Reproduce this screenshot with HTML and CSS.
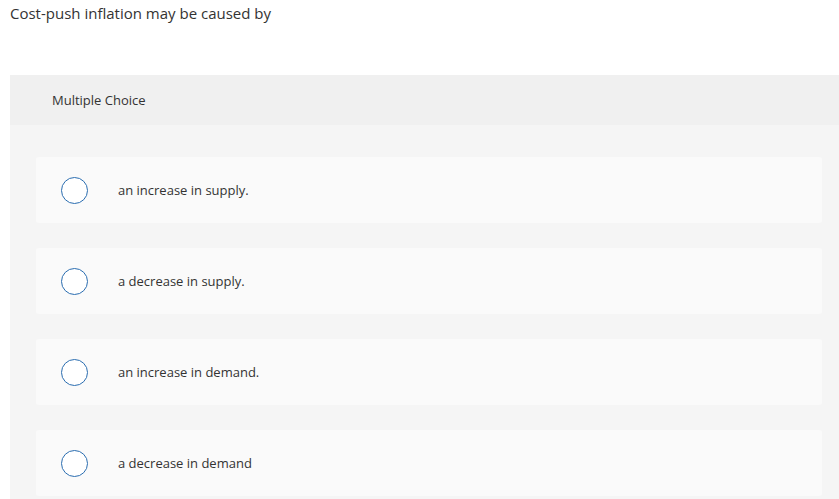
FILE: index.html
```html
<!DOCTYPE html>
<html>
<head>
<meta charset="utf-8">
<link rel="stylesheet" href="styles.css">
</head>
<body>
<p class="question">Cost-push inflation may be caused by</p>
<section class="panel">
  <div class="panel-head">Multiple Choice</div>
  <div class="panel-body">
    <div class="choice"><span class="radio"></span><span class="label">an increase in supply.</span></div>
    <div class="choice"><span class="radio"></span><span class="label">a decrease in supply.</span></div>
    <div class="choice"><span class="radio"></span><span class="label">an increase in demand.</span></div>
    <div class="choice"><span class="radio"></span><span class="label">a decrease in demand</span></div>
  </div>
</section>
</body>
</html>
```

FILE: styles.css
```css
html, body { margin: 0; padding: 0; background: #fff; }
body {
  font-family: "Open Sans", "Liberation Sans", sans-serif;
  color: #333;
  padding: 0 0 0 10px;
  overflow: hidden;
}
.question {
  margin: 0;
  padding-top: 4px;
  height: 71px;
  font-size: 15px;
  line-height: 18px;
  color: #333;
}
.panel { background: #f5f5f5; }
.panel-head {
  background: #f0f0f0;
  height: 50px;
  display: flex;
  align-items: center;
  padding-left: 42px;
  font-size: 13px;
}
.panel-body {
  padding: 32px 17px 20px 26px;
  display: flex;
  flex-direction: column;
  gap: 25px;
}
.choice {
  background: #fafafa;
  border-radius: 3px;
  height: 66px;
  display: flex;
  align-items: center;
  padding-left: 25px;
}
.radio {
  width: 25px;
  height: 25px;
  border: 1.5px solid #2a6db0;
  border-radius: 50%;
  background: #fff;
  flex: none;
}
.label {
  margin-left: 30px;
  font-size: 13px;
  color: #333;
}
```
